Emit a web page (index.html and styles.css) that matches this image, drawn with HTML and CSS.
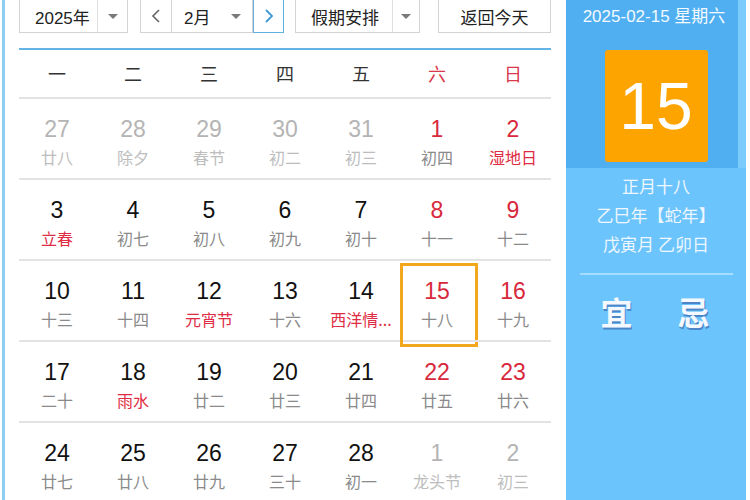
FILE: index.html
```html
<!DOCTYPE html>
<html lang="zh">
<head>
<meta charset="utf-8">
<title>万年历</title>
<link rel="stylesheet" href="styles.css">
</head>
<body>
<div class="page">
  <div class="edge"></div>
  <div class="main">
    <div class="toolbar">
      <div class="box year">
        <span class="label">2025年</span>
        <span class="drop"><i class="tri"></i></span>
      </div>
      <div class="group">
        <div class="box prev">
          <svg width="10" height="16" viewBox="0 0 10 16"><polyline points="8,2 2,8 8,14" fill="none" stroke="#666" stroke-width="1.6"/></svg>
        </div>
        <div class="box month">
          <span class="label">2月</span>
          <i class="tri"></i>
        </div>
        <div class="box next">
          <svg width="10" height="16" viewBox="0 0 10 16"><polyline points="2,2 8,8 2,14" fill="none" stroke="#3d9bd6" stroke-width="1.8"/></svg>
        </div>
      </div>
      <div class="box holiday">
        <span class="label">假期安排</span>
        <span class="drop"><i class="tri"></i></span>
      </div>
      <div class="box today">返回今天</div>
    </div>
    <div class="blueline"></div>
    <div class="weekdays">
      <span>一</span><span>二</span><span>三</span><span>四</span><span>五</span><span class="wr">六</span><span class="wr">日</span>
    </div>
    <div class="grid">
      <div class="cell o"><div class="num">27</div><div class="lun">廿八</div></div>
      <div class="cell o"><div class="num">28</div><div class="lun">除夕</div></div>
      <div class="cell o"><div class="num">29</div><div class="lun">春节</div></div>
      <div class="cell o"><div class="num">30</div><div class="lun">初二</div></div>
      <div class="cell o"><div class="num">31</div><div class="lun">初三</div></div>
      <div class="cell r"><div class="num">1</div><div class="lun">初四</div></div>
      <div class="cell r lr"><div class="num">2</div><div class="lun">湿地日</div></div>

      <div class="cell lr"><div class="num">3</div><div class="lun">立春</div></div>
      <div class="cell"><div class="num">4</div><div class="lun">初七</div></div>
      <div class="cell"><div class="num">5</div><div class="lun">初八</div></div>
      <div class="cell"><div class="num">6</div><div class="lun">初九</div></div>
      <div class="cell"><div class="num">7</div><div class="lun">初十</div></div>
      <div class="cell r"><div class="num">8</div><div class="lun">十一</div></div>
      <div class="cell r"><div class="num">9</div><div class="lun">十二</div></div>

      <div class="cell"><div class="num">10</div><div class="lun">十三</div></div>
      <div class="cell"><div class="num">11</div><div class="lun">十四</div></div>
      <div class="cell lr"><div class="num">12</div><div class="lun">元宵节</div></div>
      <div class="cell"><div class="num">13</div><div class="lun">十六</div></div>
      <div class="cell lr"><div class="num">14</div><div class="lun">西洋情...</div></div>
      <div class="cell r sel"><div class="num">15</div><div class="lun">十八</div></div>
      <div class="cell r"><div class="num">16</div><div class="lun">十九</div></div>

      <div class="cell"><div class="num">17</div><div class="lun">二十</div></div>
      <div class="cell lr"><div class="num">18</div><div class="lun">雨水</div></div>
      <div class="cell"><div class="num">19</div><div class="lun">廿二</div></div>
      <div class="cell"><div class="num">20</div><div class="lun">廿三</div></div>
      <div class="cell"><div class="num">21</div><div class="lun">廿四</div></div>
      <div class="cell r"><div class="num">22</div><div class="lun">廿五</div></div>
      <div class="cell r"><div class="num">23</div><div class="lun">廿六</div></div>

      <div class="cell last"><div class="num">24</div><div class="lun">廿七</div></div>
      <div class="cell last"><div class="num">25</div><div class="lun">廿八</div></div>
      <div class="cell last"><div class="num">26</div><div class="lun">廿九</div></div>
      <div class="cell last"><div class="num">27</div><div class="lun">三十</div></div>
      <div class="cell last"><div class="num">28</div><div class="lun">初一</div></div>
      <div class="cell last o"><div class="num">1</div><div class="lun">龙头节</div></div>
      <div class="cell last o"><div class="num">2</div><div class="lun">初三</div></div>
    </div>
  </div>
  <div class="side">
    <div class="side-top">
      <div class="date">2025-02-15 星期六</div>
      <div class="bigday">15</div>
    </div>
    <div class="side-info">
      <div class="line">正月十八</div>
      <div class="line">乙巳年【蛇年】</div>
      <div class="line">戊寅月 乙卯日</div>
      <div class="sep"></div>
      <div class="yiji"><span>宜</span><span>忌</span></div>
    </div>
  </div>
</div>
</body>
</html>
```

FILE: styles.css
```css
* { box-sizing: border-box; }
html, body {
  margin: 0;
  padding: 0;
}
body {
  width: 750px;
  height: 500px;
  overflow: hidden;
  background: #ffffff;
  font-family: "Liberation Sans", "Noto Sans CJK SC", sans-serif;
  color: #111;
}
.page {
  display: flex;
  height: 500px;
  overflow: hidden;
}
.edge {
  width: 3px;
  margin-left: 2px;
  background: #8ccff2;
  flex-shrink: 0;
}
.main {
  margin-left: 14px;
  width: 532px;
  flex-shrink: 0;
}
.toolbar {
  display: flex;
  height: 33px;
}
.box {
  height: 33px;
  border: 1px solid #d3d3d3;
  border-top: none;
  background: #fff;
  display: flex;
  align-items: center;
  font-size: 17px;
  color: #222;
}
.tri {
  display: inline-block;
  width: 0;
  height: 0;
  border-left: 5px solid transparent;
  border-right: 5px solid transparent;
  border-top: 5px solid #7a7a7a;
}
.drop {
  height: 100%;
  display: flex;
  align-items: center;
  justify-content: center;
  border-left: 1px solid #dedede;
}
.year {
  width: 109px;
}
.year .label {
  width: 77px;
  padding-left: 15px;
}
.year .drop {
  flex: 1;
}
.group {
  display: flex;
  margin-left: 12px;
}
.prev {
  width: 32px;
  justify-content: center;
}
.month {
  width: 81px;
  border-left: none;
  padding-left: 12px;
}
.month .label {
  width: 47px;
}
.next {
  width: 31px;
  justify-content: center;
  border: 1px solid #5fb2e2;
  border-top: none;
}
.holiday {
  width: 125px;
  margin-left: 11px;
}
.holiday .label {
  width: 96px;
  padding-left: 15px;
}
.holiday .drop {
  flex: 1;
}
.today {
  width: 113px;
  margin-left: 18px;
  justify-content: center;
}
.blueline {
  margin-top: 15px;
  height: 2px;
  background: #62b5e5;
}
.weekdays {
  height: 49px;
  display: grid;
  grid-template-columns: repeat(7, 1fr);
  align-items: center;
  border-bottom: 2px solid #e3e3e3;
  font-family: "Noto Sans CJK SC", sans-serif;
  font-size: 18px;
  color: #333;
  text-align: center;
  padding-bottom: 2px;
}
.weekdays .wr {
  color: #d8384a;
}
.grid {
  display: grid;
  grid-template-columns: repeat(7, 1fr);
}
.cell {
  height: 81px;
  border-bottom: 2px solid #e3e3e3;
  text-align: center;
  position: relative;
}
.cell.last {
  border-bottom: none;
}
.num {
  padding-top: 17px;
  font-size: 23px;
  line-height: 26px;
  color: #111;
}
.lun {
  margin-top: 5px;
  font-family: "Noto Sans CJK SC", sans-serif;
  font-size: 16px;
  line-height: 20px;
  color: #8a8a8a;
  white-space: nowrap;
}
.cell.o .num { color: #b4b4b4; }
.cell.o .lun { color: #bdbdbd; }
.cell.r .num { color: #d8283c; }
.cell.lr .lun { color: #df2c44; }
.cell.sel::after {
  content: "";
  position: absolute;
  left: 1px;
  top: 2px;
  width: 72px;
  height: 78px;
  border: 3px solid #f2a71c;
}
.side {
  margin-left: 15px;
  width: 180px;
  flex-shrink: 0;
  background: #6cc4fc;
  display: flex;
  flex-direction: column;
}
.side-top {
  height: 168px;
  flex-shrink: 0;
  background: #4faff0;
  box-shadow: inset -8px 0 0 #7cccfb;
  display: flex;
  flex-direction: column;
  align-items: center;
}
.date {
  margin-top: 7px;
  font-family: "Liberation Sans", "Noto Sans CJK SC", sans-serif;
  font-size: 17px;
  line-height: 20px;
  color: #f4faff;
  padding-right: 4px;
}
.bigday {
  margin-top: 23px;
  width: 103px;
  height: 112px;
  background: #fea400;
  border-radius: 3px;
  color: #ffffff;
  font-size: 66px;
  line-height: 112px;
  text-align: center;
}
.side-info {
  display: flex;
  flex-direction: column;
  align-items: center;
  padding-top: 3px;
  font-family: "Noto Sans CJK SC", sans-serif;
}
.line {
  font-size: 17px;
  line-height: 29px;
  color: #eef7ff;
}
.sep {
  margin-top: 15px;
  width: 153px;
  height: 2px;
  background: #a6dcfd;
}
.yiji {
  margin-top: 16px;
  display: flex;
  gap: 45px;
  padding-right: 2px;
}
.yiji span {
  font-size: 32px;
  line-height: 40px;
  font-weight: bold;
  color: #f4f9ff;
  text-shadow: 1px 2px 0 #4a86c8;
}
```
